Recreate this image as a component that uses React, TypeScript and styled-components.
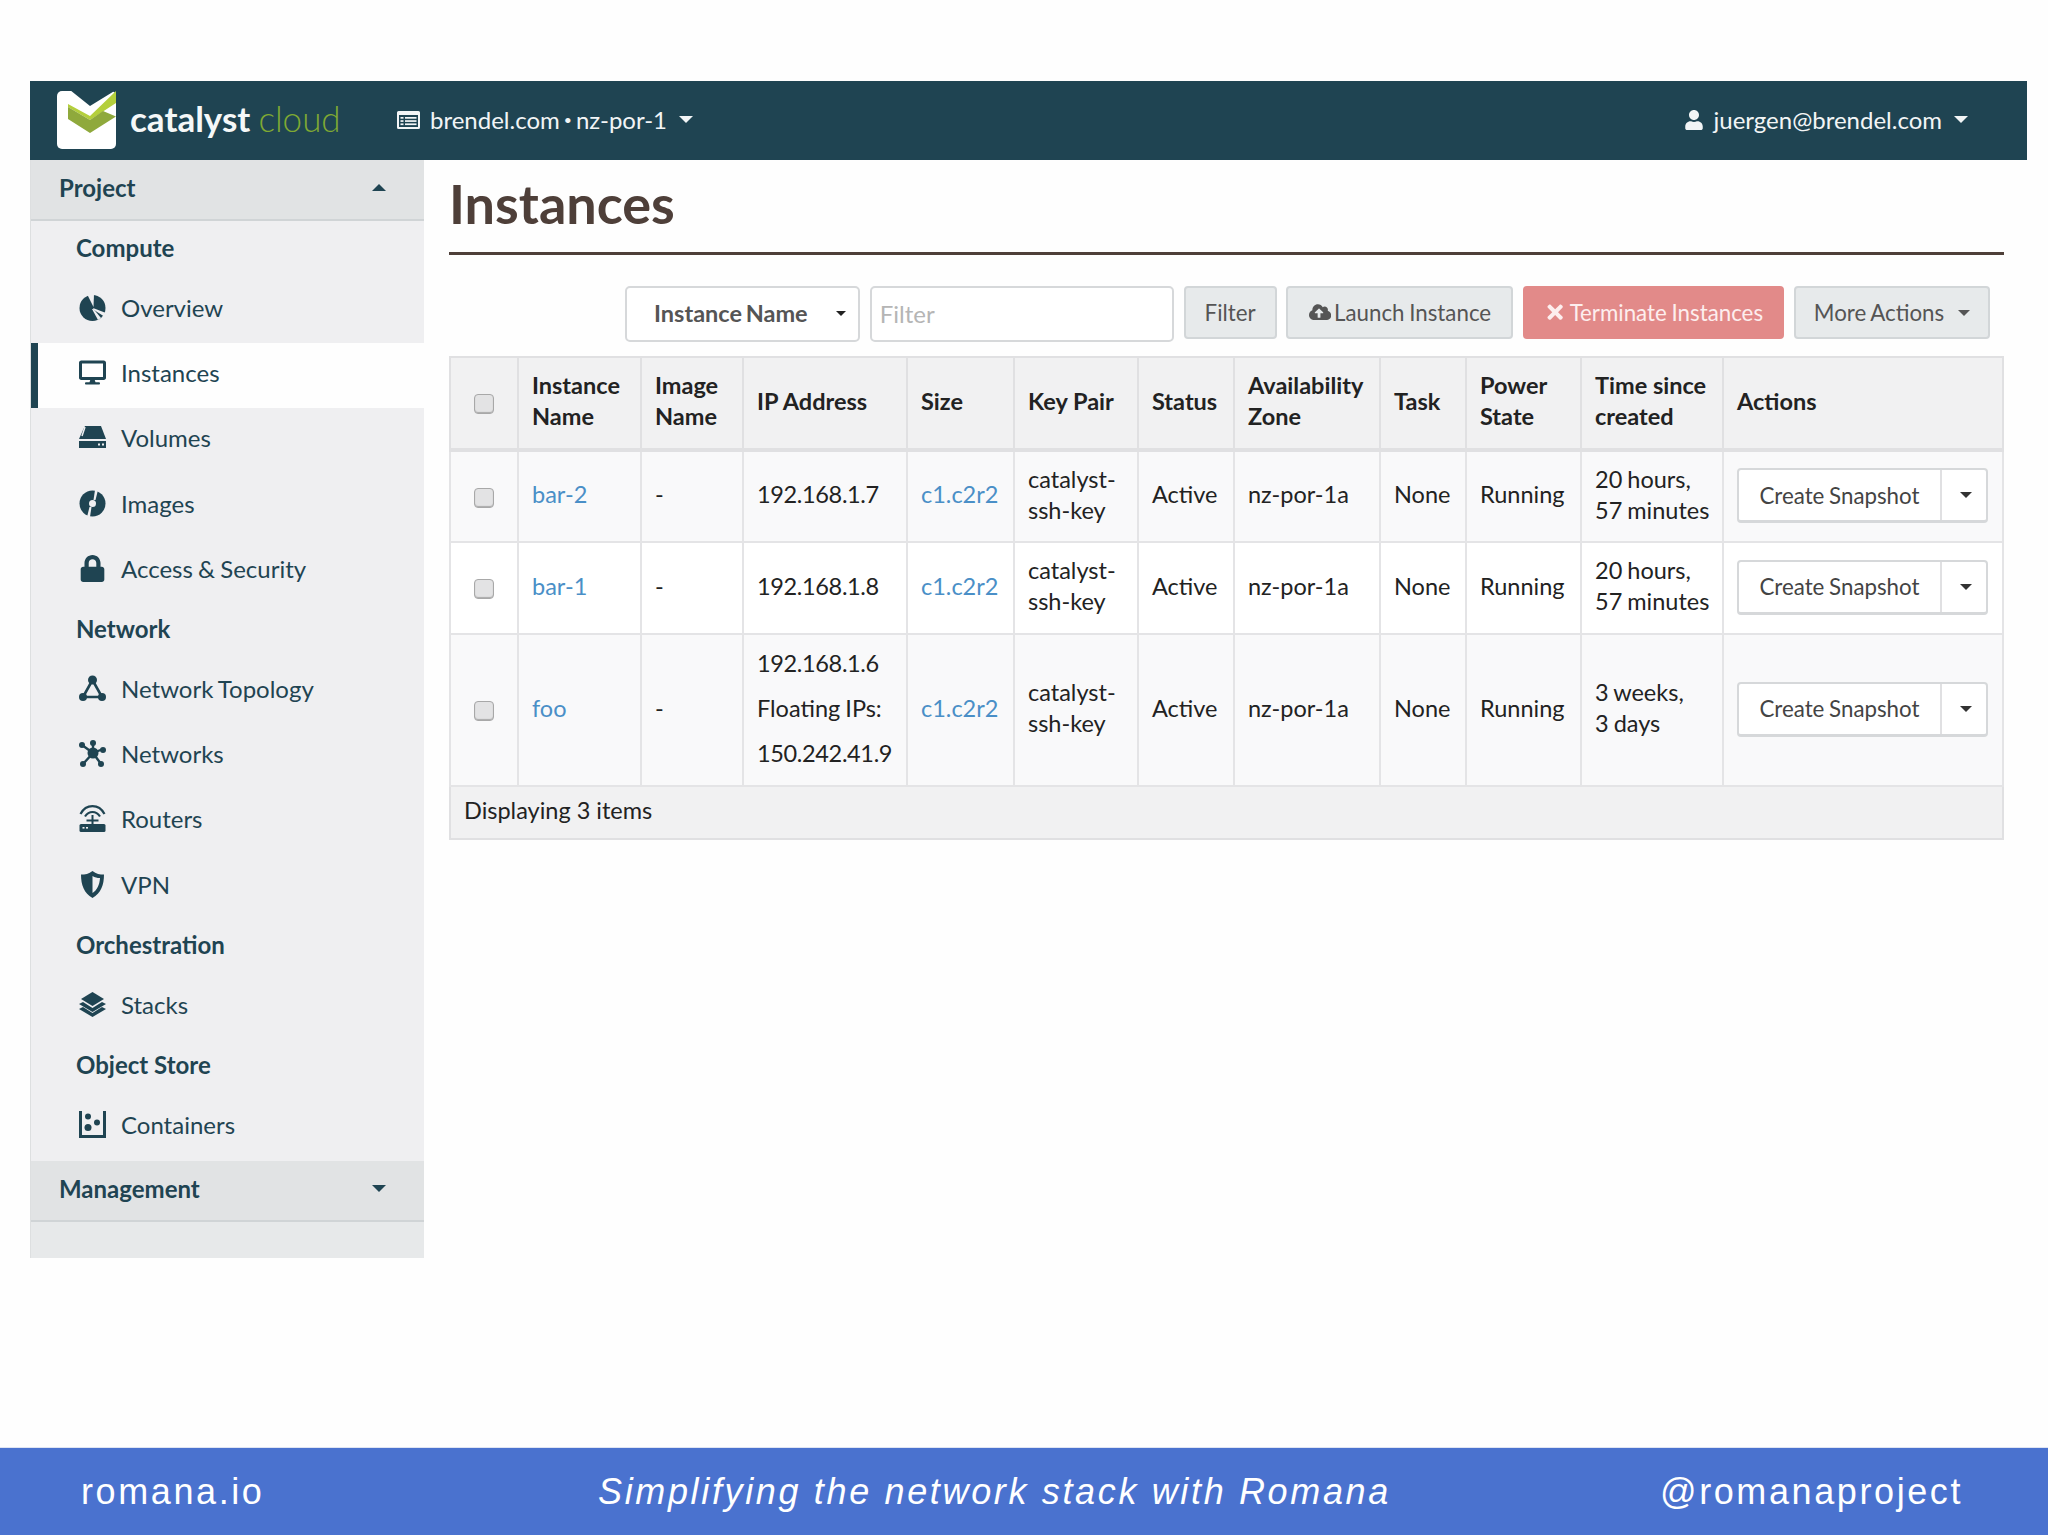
import React from "react";
import styled, { createGlobalStyle } from "styled-components";
import { FaUser, FaCloudUploadAlt, FaTimes, FaLock, FaDesktop } from "react-icons/fa";

const INK = "#1f4452";
const SIDE = "#efeff1";

const Global = createGlobalStyle`
  html, body { margin: 0; padding: 0; background: #fefefe; }
  * { box-sizing: border-box; }
  body { font-family: Lato, "Noto Sans", sans-serif; }
`;

const Page = styled.div`
  width: 2048px;
  height: 1535px;
  display: flex;
  flex-direction: column;
  overflow: hidden;
`;
const Slide = styled.div`
  flex: 1;
  padding: 81px 21px 0 30px;
  display: flex;
  flex-direction: column;
`;
const TopBar = styled.header`
  height: 79px;
  background: ${INK};
  color: #f2f5f6;
  display: flex;
  align-items: center;
  padding: 0 59px 2px 27px;
  font-size: 24px;
`;
const LogoMark = styled.svg`
  width: 59px;
  height: 58px;
  flex: none;
`;
const Brand = styled.div`
  font-size: 35px;
  font-weight: 700;
  color: #f5f8f8;
  margin: 0 0 4px 14px;
  width: 267px;
  flex: none;
  white-space: nowrap;
`;
const BrandSoft = styled.span`
  font-weight: 300;
  color: #7fa933;
  margin-left: 8px;
`;
const BarItem = styled.div`
  display: flex;
  align-items: center;
  white-space: nowrap;
`;
const UserItem = styled(BarItem)`
  margin-left: auto;
`;
const BarIconGap = styled.span`
  display: inline-flex;
  margin-right: 10px;
  font-size: 20px;
`;
const Dot = styled.span`
  font-size: 14px;
  margin: 0 4px;
`;
const Caret = styled.span<{ $up?: boolean; $size?: number; $color?: string }>`
  display: inline-block;
  width: 0;
  height: 0;
  border-left: ${(p) => p.$size ?? 7}px solid transparent;
  border-right: ${(p) => p.$size ?? 7}px solid transparent;
  ${(p) =>
    p.$up
      ? `border-bottom: ${p.$size ?? 7}px solid ${p.$color ?? "currentColor"};`
      : `border-top: ${p.$size ?? 7}px solid ${p.$color ?? "currentColor"};`}
`;
const BarCaret = styled(Caret)`
  margin-left: 12px;
`;
const Body = styled.div`
  display: flex;
  align-items: flex-start;
`;
const Sidebar = styled.nav`
  width: 394px;
  height: 1098px;
  flex: none;
  background: #e7e9ea;
  border-left: 1px solid #dddfe0;
  color: ${INK};
  font-size: 24px;
`;
const PanelHead = styled.div`
  height: 61px;
  background: #e1e3e4;
  border-bottom: 2px solid #d0d4d6;
  display: flex;
  align-items: center;
  justify-content: space-between;
  padding: 0 38px 5px 28px;
  font-weight: 700;
`;
const NavBody = styled.div`
  background: ${SIDE};
  height: 940px;
`;
const NavHeading = styled.div<{ $h: number }>`
  height: ${(p) => p.$h}px;
  display: flex;
  align-items: center;
  padding: 0 0 5px 45px;
  font-weight: 700;
`;
const NavItem = styled.div<{ $active?: boolean }>`
  height: 65.2px;
  display: flex;
  align-items: center;
  padding: 0 0 6px ${(p) => (p.$active ? 41 : 48)}px;
  background: ${(p) => (p.$active ? "#fefefe" : "transparent")};
  border-left: ${(p) => (p.$active ? `7px solid ${INK}` : "none")};
  gap: 15px;
  word-spacing: -1px;
`;
const NavIcon = styled.svg`
  width: 27px;
  height: 27px;
  flex: none;
  fill: ${INK};
`;
const FaSlot = styled.span`
  width: 27px;
  height: 27px;
  flex: none;
  display: inline-flex;
  align-items: center;
  justify-content: center;
  font-size: 27px;
`;
const Main = styled.main`
  flex: 1;
  padding: 0 25px 0 25px;
`;
const Title = styled.h1`
  margin: 0;
  height: 95px;
  border-bottom: 3px solid #4e3f39;
  color: #4e3f39;
  font-size: 54px;
  font-weight: 700;
  line-height: 88px;
`;
const Toolbar = styled.div`
  display: flex;
  justify-content: flex-end;
  align-items: flex-start;
  gap: 9.8px;
  padding: 31px 14px 0 0;
  height: 101px;
  font-size: 22.5px;
`;
const SelectBox = styled.div`
  width: 235px;
  height: 56px;
  background: #fff;
  border: 2px solid #d6d8da;
  border-radius: 5px;
  display: flex;
  align-items: center;
  justify-content: space-between;
  padding: 0 12px 2px 27px;
  color: #555;
  font-size: 23.5px;
  font-weight: 700;
  word-spacing: -2px;
`;
const SelectArrow = styled(Caret)`
  color: #222;
`;
const FilterInput = styled.input`
  width: 304px;
  height: 56px;
  border: 2px solid #d6d8da;
  border-radius: 5px;
  padding: 0 8px 2px;
  font: 400 24px Lato, sans-serif;
  outline: none;
  background: #fff;
  &::placeholder { color: #b5b5b5; opacity: 1; }
`;
const ToolButton = styled.button<{ $w: number; $danger?: boolean }>`
  width: ${(p) => p.$w}px;
  height: 53px;
  border-radius: 4px;
  border: 2px solid ${(p) => (p.$danger ? "#e28a89" : "#d2d6d8")};
  background: ${(p) => (p.$danger ? "#e28a89" : "#e7eaeb")};
  color: ${(p) => (p.$danger ? "#fdeeee" : "#555")};
  font: 400 22.3px Lato, sans-serif;
  word-spacing: -1px;
  display: flex;
  align-items: center;
  justify-content: center;
  gap: 3px;
  padding: 0;
  white-space: nowrap;
`;
const ButtonCaret = styled(Caret)`
  margin-left: 11px;
`;
const Table = styled.table`
  width: 100%;
  table-layout: fixed;
  border-collapse: collapse;
  font-size: 23.5px;
  line-height: 31px;
  color: #222;
  border: 2px solid #e0e0e2;
`;
const Col = styled.col<{ $w: number }>`
  width: ${(p) => p.$w}px;
`;
const HeadRow = styled.tr`
  height: 93px;
  background: #f1f1f2;
`;
const Th = styled.th`
  text-align: left;
  font-weight: 700;
  padding: 0 14px 4px 13px;
  border: 2px solid #e0e0e2;
  border-bottom-width: 4px;
`;
const Row = styled.tr<{ $h: number; $odd?: boolean }>`
  height: ${(p) => p.$h}px;
  background: ${(p) => (p.$odd ? "#f9f9fa" : "#fff")};
`;
const Td = styled.td`
  padding: 0 14px 4px 13px;
  border: 2px solid #e4e4e6;
  vertical-align: middle;
  white-space: nowrap;
  word-spacing: -1px;
`;
const CheckCell = styled(Td)`
  text-align: center;
  padding: 0 0 3px;
`;
const CheckTh = styled(Th)`
  text-align: center;
  padding: 0 0 3px;
`;
const ActionCell = styled(Td)`
  padding: 0 14px 2px 13px;
`;
const Check = styled.input.attrs({ type: "checkbox" })`
  appearance: none;
  width: 20px;
  height: 20px;
  margin: 0;
  display: inline-block;
  vertical-align: middle;
  border: 1px solid #a8a8a8;
  border-radius: 4px;
  background: #e3e3e4;
  box-shadow: inset 0 -1px 1px #aaa;
`;
const Link = styled.a`
  color: #4a8fc7;
  text-decoration: none;
`;
const IpLine = styled.div<{ $tight?: boolean }>`
  line-height: 45px;
  letter-spacing: ${(p) => (p.$tight ? "-0.35px" : "0")};
`;
const SplitButton = styled.div`
  width: 251px;
  height: 55px;
  display: flex;
  background: #fff;
  border: 2px solid #d6d8da;
  border-bottom-width: 3px;
  border-radius: 4px;
  color: #444;
  font-size: 22.3px;
`;
const SplitMain = styled.span`
  width: 203px;
  display: flex;
  align-items: center;
  justify-content: center;
  border-right: 2px solid #e0e0e2;
`;
const SplitDrop = styled.span`
  flex: 1;
  display: flex;
  align-items: center;
  justify-content: center;
  padding-left: 3px;
  color: #333;
`;
const FootRow = styled.tr`
  height: 53px;
  background: #f1f1f2;
`;
const FootCell = styled.td`
  padding: 0 14px 4px 13px;
`;
const Footer = styled.footer`
  height: 88px;
  background: #4a72cf;
  border-top: 1px solid #dfe4f2;
  color: #fff;
  font-family: "Liberation Sans", Arial, sans-serif;
  font-size: 36px;
  letter-spacing: 2.6px;
  display: grid;
  grid-template-columns: 517px 1062px auto;
  align-items: center;
  padding-left: 81px;
  white-space: nowrap;
`;
const Tagline = styled.span`
  font-style: italic;
  letter-spacing: 2.65px;
`;

const Logo = () => (
  <LogoMark viewBox="0 0 59 58">
    <rect x="0" y="0" width="59" height="58" rx="5" fill="#fff" />
    <polygon points="13,-1 33,15 59,-1" fill={INK} />
    <polygon points="11,13 33,25 59,0 59,12 33,29 11,16" fill="#b4cf3c" />
    <polygon points="11,16 33,29 46,20 59,25.5 33,42 11,28" fill="#8fa93c" />
  </LogoMark>
);

const OverviewIcon = () => (
  <NavIcon viewBox="0 0 27 27">
    <circle cx="13.5" cy="14" r="13" />
    <polygon points="11,0 15,0 14.5,13 8,0" fill={SIDE} />
    <polygon points="14,14 27,19 26,23 15,16" fill={SIDE} />
    <polygon points="14.5,15 22,24 19,26 13,15" fill={SIDE} />
  </NavIcon>
);
const VolumeIcon = () => (
  <NavIcon viewBox="0 0 27 27">
    <polygon points="6,2 22,2 27,15 0,15 4,6" />
    <line x1="6" y1="3" x2="3" y2="12" stroke={SIDE} strokeWidth="1.5" />
    <rect x="0" y="17" width="27" height="7" />
    <rect x="19" y="19.5" width="2" height="2" fill={SIDE} />
    <rect x="23" y="19.5" width="2" height="2" fill={SIDE} />
  </NavIcon>
);
const ImageIcon = () => (
  <NavIcon viewBox="0 0 27 27">
    <circle cx="13.5" cy="13.5" r="13" />
    <circle cx="13.5" cy="13.5" r="3.5" fill={SIDE} />
    <polygon points="16,0 19,0 16.5,10 14.5,10" fill={SIDE} />
    <polygon points="10.5,17 12.5,17 11,27 8,27" fill={SIDE} />
  </NavIcon>
);
const TopologyIcon = () => (
  <NavIcon viewBox="0 0 27 27">
    <path d="M13.5 5 L4 22 H23 Z" fill="none" stroke={INK} strokeWidth="2.6" />
    <circle cx="13.5" cy="5" r="4.5" />
    <circle cx="4" cy="22" r="4" />
    <circle cx="23" cy="22" r="4" />
  </NavIcon>
);
const NetworksIcon = () => (
  <NavIcon viewBox="0 0 27 27">
    <path d="M14 13 L14 3 M14 13 L3 5 M14 13 L24 9 M14 13 L4 24 M14 13 L22 24" stroke={INK} strokeWidth="2.4" />
    <circle cx="14" cy="13" r="5.5" />
    <circle cx="14" cy="3" r="3" />
    <circle cx="3" cy="5" r="3" />
    <circle cx="24" cy="10" r="3" />
    <circle cx="4" cy="24" r="3" />
    <circle cx="22" cy="24" r="3" />
  </NavIcon>
);
const RouterIcon = () => (
  <NavIcon viewBox="0 0 27 27">
    <path d="M1.5 9 C7 -1.5 20 -1.5 25.5 9 M6 11.5 C10 5.5 17 5.5 21 11.5" fill="none" stroke={INK} strokeWidth="2.2" />
    <rect x="12.5" y="10" width="2" height="9" />
    <rect x="7.5" y="14.5" width="12" height="2" />
    <rect x="0.5" y="19" width="26" height="8" rx="1.5" />
    <rect x="3.5" y="22" width="2" height="1.6" fill={SIDE} />
    <rect x="7" y="22" width="2" height="1.6" fill={SIDE} />
  </NavIcon>
);
const ShieldIcon = () => (
  <NavIcon viewBox="0 0 27 27">
    <path fillRule="evenodd" d="M13.5 0 C17 3 21 3.5 25 3.5 C25 14 22 22 13.5 27 C5 22 2 14 2 3.5 C6 3.5 10 3 13.5 0 Z M13.5 5 V22 C18 19 20.5 14 21 7 C18 7 16 6.5 13.5 5 Z" />
  </NavIcon>
);
const StackIcon = () => (
  <NavIcon viewBox="0 0 27 27">
    <polygon points="13.5,1 25,8 13.5,15 2,8" />
    <polygon points="0,13 4,11 13.5,17 23,11 27,13 13.5,21" />
    <polygon points="0,18 4,16 13.5,22 23,16 27,18 13.5,26" />
  </NavIcon>
);
const ContainerIcon = () => (
  <NavIcon viewBox="0 0 27 27">
    <path d="M0 0 H3 V24 H24 V0 H27 V27 H0 Z" />
    <circle cx="9" cy="5.5" r="3" />
    <circle cx="9" cy="16.5" r="3.5" />
    <circle cx="18" cy="11.5" r="3" />
  </NavIcon>
);
const ListIcon = () => (
  <svg width="23" height="18" viewBox="0 0 23 18" fill="#f2f5f6">
    <path fillRule="evenodd" d="M1.5 0 H21.5 A1.5 1.5 0 0 1 23 1.5 V16.5 A1.5 1.5 0 0 1 21.5 18 H1.5 A1.5 1.5 0 0 1 0 16.5 V1.5 A1.5 1.5 0 0 1 1.5 0 Z M2 4 V16 H21 V4 Z" />
    <rect x="3.5" y="6" width="3" height="1.7" />
    <rect x="8" y="6" width="11.5" height="1.7" />
    <rect x="3.5" y="9.2" width="3" height="1.7" />
    <rect x="8" y="9.2" width="11.5" height="1.7" />
    <rect x="3.5" y="12.4" width="3" height="1.7" />
    <rect x="8" y="12.4" width="11.5" height="1.7" />
  </svg>
);

type Nav =
  | { kind: "h"; label: string; h: number }
  | { kind: "i"; label: string; icon: React.ReactNode; active?: boolean };

const nav: Nav[] = [
  { kind: "h", label: "Compute", h: 57 },
  { kind: "i", label: "Overview", icon: <OverviewIcon /> },
  { kind: "i", label: "Instances", active: true, icon: <FaSlot><FaDesktop /></FaSlot> },
  { kind: "i", label: "Volumes", icon: <VolumeIcon /> },
  { kind: "i", label: "Images", icon: <ImageIcon /> },
  { kind: "i", label: "Access & Security", icon: <FaSlot><FaLock /></FaSlot> },
  { kind: "h", label: "Network", h: 55 },
  { kind: "i", label: "Network Topology", icon: <TopologyIcon /> },
  { kind: "i", label: "Networks", icon: <NetworksIcon /> },
  { kind: "i", label: "Routers", icon: <RouterIcon /> },
  { kind: "i", label: "VPN", icon: <ShieldIcon /> },
  { kind: "h", label: "Orchestration", h: 55 },
  { kind: "i", label: "Stacks", icon: <StackIcon /> },
  { kind: "h", label: "Object Store", h: 55 },
  { kind: "i", label: "Containers", icon: <ContainerIcon /> },
];

const cols = [68, 123, 102, 164, 107, 124, 96, 146, 86, 115, 142, 280];

type Inst = { name: string; ip: string[]; time: [string, string]; h: number; odd: boolean };
const rows: Inst[] = [
  { name: "bar-2", ip: ["192.168.1.7"], time: ["20 hours,", "57 minutes"], h: 92, odd: true },
  { name: "bar-1", ip: ["192.168.1.8"], time: ["20 hours,", "57 minutes"], h: 92, odd: false },
  { name: "foo", ip: ["192.168.1.6", "Floating IPs:", "150.242.41.9"], time: ["3 weeks,", "3 days"], h: 152, odd: true },
];

export default function App() {
  return (
    <Page>
      <Global />
      <Slide>
        <TopBar>
          <Logo />
          <Brand>
            catalyst<BrandSoft>cloud</BrandSoft>
          </Brand>
          <BarItem>
            <BarIconGap><ListIcon /></BarIconGap>
            brendel.com<Dot>•</Dot>nz-por-1
            <BarCaret />
          </BarItem>
          <UserItem>
            <BarIconGap><FaUser /></BarIconGap>
            juergen@brendel.com
            <BarCaret />
          </UserItem>
        </TopBar>
        <Body>
          <Sidebar>
            <PanelHead>
              Project
              <Caret $up />
            </PanelHead>
            <NavBody>
              {nav.map((n) =>
                n.kind === "h" ? (
                  <NavHeading key={n.label} $h={n.h}>{n.label}</NavHeading>
                ) : (
                  <NavItem key={n.label} $active={n.active}>
                    {n.icon}
                    {n.label}
                  </NavItem>
                )
              )}
            </NavBody>
            <PanelHead>
              Management
              <Caret />
            </PanelHead>
          </Sidebar>
          <Main>
            <Title>Instances</Title>
            <Toolbar>
              <SelectBox>
                Instance Name
                <SelectArrow $size={5} />
              </SelectBox>
              <FilterInput placeholder="Filter" />
              <ToolButton $w={93}>Filter</ToolButton>
              <ToolButton $w={227}><FaCloudUploadAlt />Launch Instance</ToolButton>
              <ToolButton $w={261} $danger><FaTimes />Terminate Instances</ToolButton>
              <ToolButton $w={196}>More Actions<ButtonCaret $size={6} /></ToolButton>
            </Toolbar>
            <Table>
              <colgroup>
                {cols.map((w, i) => <Col key={i} $w={w} />)}
              </colgroup>
              <thead>
                <HeadRow>
                  <CheckTh><Check /></CheckTh>
                  <Th>Instance<br />Name</Th>
                  <Th>Image<br />Name</Th>
                  <Th>IP Address</Th>
                  <Th>Size</Th>
                  <Th>Key Pair</Th>
                  <Th>Status</Th>
                  <Th>Availability<br />Zone</Th>
                  <Th>Task</Th>
                  <Th>Power<br />State</Th>
                  <Th>Time since<br />created</Th>
                  <Th>Actions</Th>
                </HeadRow>
              </thead>
              <tbody>
                {rows.map((r) => (
                  <Row key={r.name} $h={r.h} $odd={r.odd}>
                    <CheckCell><Check /></CheckCell>
                    <Td><Link>{r.name}</Link></Td>
                    <Td>-</Td>
                    <Td>{r.ip.map((l) => <IpLine key={l} $tight={/^\d/.test(l)}>{l}</IpLine>)}</Td>
                    <Td><Link>c1.c2r2</Link></Td>
                    <Td>catalyst-<br />ssh-key</Td>
                    <Td>Active</Td>
                    <Td>nz-por-1a</Td>
                    <Td>None</Td>
                    <Td>Running</Td>
                    <Td>{r.time[0]}<br />{r.time[1]}</Td>
                    <ActionCell>
                      <SplitButton>
                        <SplitMain>Create Snapshot</SplitMain>
                        <SplitDrop><Caret $size={6} /></SplitDrop>
                      </SplitButton>
                    </ActionCell>
                  </Row>
                ))}
              </tbody>
              <tfoot>
                <FootRow>
                  <FootCell colSpan={12}>Displaying 3 items</FootCell>
                </FootRow>
              </tfoot>
            </Table>
          </Main>
        </Body>
      </Slide>
      <Footer>
        <span>romana.io</span>
        <Tagline>Simplifying the network stack with Romana</Tagline>
        <span>@romanaproject</span>
      </Footer>
    </Page>
  );
}
